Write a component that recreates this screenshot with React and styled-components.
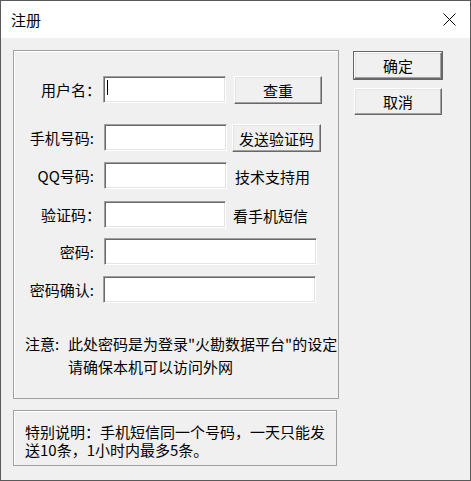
import React from 'react';
import styled, { createGlobalStyle } from 'styled-components';

const Global = createGlobalStyle`
  body {
    margin: 0;
    background: #ffffff;
    font-family: "Noto Sans CJK SC", "Liberation Sans", sans-serif;
  }
`;

const Window = styled.div`
  width: 471px;
  height: 481px;
  box-sizing: border-box;
  border: 1px solid #5a5a5a;
  background: #f0f0f0;
  display: flex;
  flex-direction: column;
  color: #000;
  font-size: 15px;
`;

const TitleBar = styled.div`
  height: 37px;
  background: #ffffff;
  display: flex;
  align-items: center;
  justify-content: space-between;
  padding: 0 14px 0 10px;
  font-size: 15px;
`;

const Body = styled.div`
  flex: 1;
  display: flex;
  gap: 15px;
  padding: 12px 0 0 12px;
`;

const LeftCol = styled.div`
  display: flex;
  flex-direction: column;
  gap: 11px;
`;

const RightCol = styled.div`
  display: flex;
  flex-direction: column;
  gap: 9px;
  padding-top: 2px;
`;

const GroupBox = styled.div`
  width: 326px;
  height: 349px;
  box-sizing: border-box;
  border: 1px solid #a0a0a0;
  box-shadow: inset 1px 1px #ffffff;
  display: flex;
  flex-direction: column;
`;

const Row = styled.div`
  display: flex;
  align-items: center;
  height: 28px;
  margin-top: ${p => p.$top}px;
`;

const Label = styled.span`
  width: ${p => p.$w || 80}px;
  text-align: right;
  margin-right: ${p => p.$gap || 9}px;
  white-space: nowrap;
  line-height: 28px;
`;

const Field = styled.div`
  position: relative;
  width: ${p => p.$w}px;
  height: 27px;
  box-sizing: border-box;
  background: #ffffff;
  border: 1px solid;
  border-color: #a0a0a0 #ffffff #ffffff #a0a0a0;
  box-shadow: inset 1px 1px #696969, inset -1px -1px #e3e3e3;
  align-self: flex-start;
`;

const Caret = styled.span`
  position: absolute;
  left: 3px;
  top: 3px;
  width: 1px;
  height: 15px;
  background: #000;
`;

const Button = styled.button`
  width: ${p => p.$w || 88}px;
  height: ${p => p.$h || 28}px;
  margin-left: ${p => p.$ml || 0}px;
  box-sizing: border-box;
  padding: 0;
  background: #f0f0f0;
  font-family: inherit;
  font-size: 15px;
  color: #000;
  border: 1px solid;
  border-color: #ffffff #696969 #696969 #ffffff;
  box-shadow: inset -1px -1px #a0a0a0, inset 1px 1px #e3e3e3;
  ${p => p.$default && `
    outline: 1px solid #646464;
    outline-offset: 0;
  `}
`;

const Side = styled.span`
  margin-left: ${p => p.$ml}px;
  white-space: nowrap;
`;

const Notice = styled.div`
  display: flex;
  margin-top: 28px;
  padding-left: 11px;
  line-height: 23px;
`;

const NoticeHead = styled.span`
  width: 43px;
  flex-shrink: 0;
`;

const NoteBox = styled.div`
  width: 324px;
  height: 56px;
  box-sizing: border-box;
  border: 1px solid #a0a0a0;
  box-shadow: inset 1px 1px #ffffff;
  padding: 12px 0 0 11px;
  line-height: 18px;
  white-space: nowrap;
`;

const CloseIcon = () => (
  <svg width="13" height="13" viewBox="0 0 13 13">
    <path d="M0.5 0.5 L12.5 12.5 M12.5 0.5 L0.5 12.5" stroke="#000" strokeWidth="1" fill="none" />
  </svg>
);

export default function App() {
  return (
    <>
      <Global />
      <Window>
        <TitleBar>
          <span>注册</span>
          <CloseIcon />
        </TitleBar>
        <Body>
          <LeftCol>
            <GroupBox>
              <Row $top={25}>
                <Label $w={87} $gap={2}>用户名：</Label>
                <Field $w={123}><Caret /></Field>
                <Button $ml={8}>查重</Button>
              </Row>
              <Row $top={20}>
                <Label $gap={10}>手机号码:</Label>
                <Field $w={123} />
                <Button $ml={5} $w={89}>发送验证码</Button>
              </Row>
              <Row $top={10}>
                <Label $gap={10}>QQ号码:</Label>
                <Field $w={123} />
                <Side $ml={8}>技术支持用</Side>
              </Row>
              <Row $top={11}>
                <Label $w={87} $gap={3}>验证码：</Label>
                <Field $w={122} />
                <Side $ml={7}>看手机短信</Side>
              </Row>
              <Row $top={9}>
                <Label $gap={10}>密码:</Label>
                <Field $w={213} />
              </Row>
              <Row $top={10}>
                <Label>密码确认:</Label>
                <Field $w={213} />
              </Row>
              <Notice>
                <NoticeHead>注意:</NoticeHead>
                <div>
                  <div>此处密码是为登录"火勘数据平台"的设定</div>
                  <div>请确保本机可以访问外网</div>
                </div>
              </Notice>
            </GroupBox>
            <NoteBox>
              特别说明：手机短信同一个号码，一天只能发<br />
              送10条，1小时内最多5条。
            </NoteBox>
          </LeftCol>
          <RightCol>
            <Button $default $h={27}>确定</Button>
            <Button $h={27}>取消</Button>
          </RightCol>
        </Body>
      </Window>
    </>
  );
}
